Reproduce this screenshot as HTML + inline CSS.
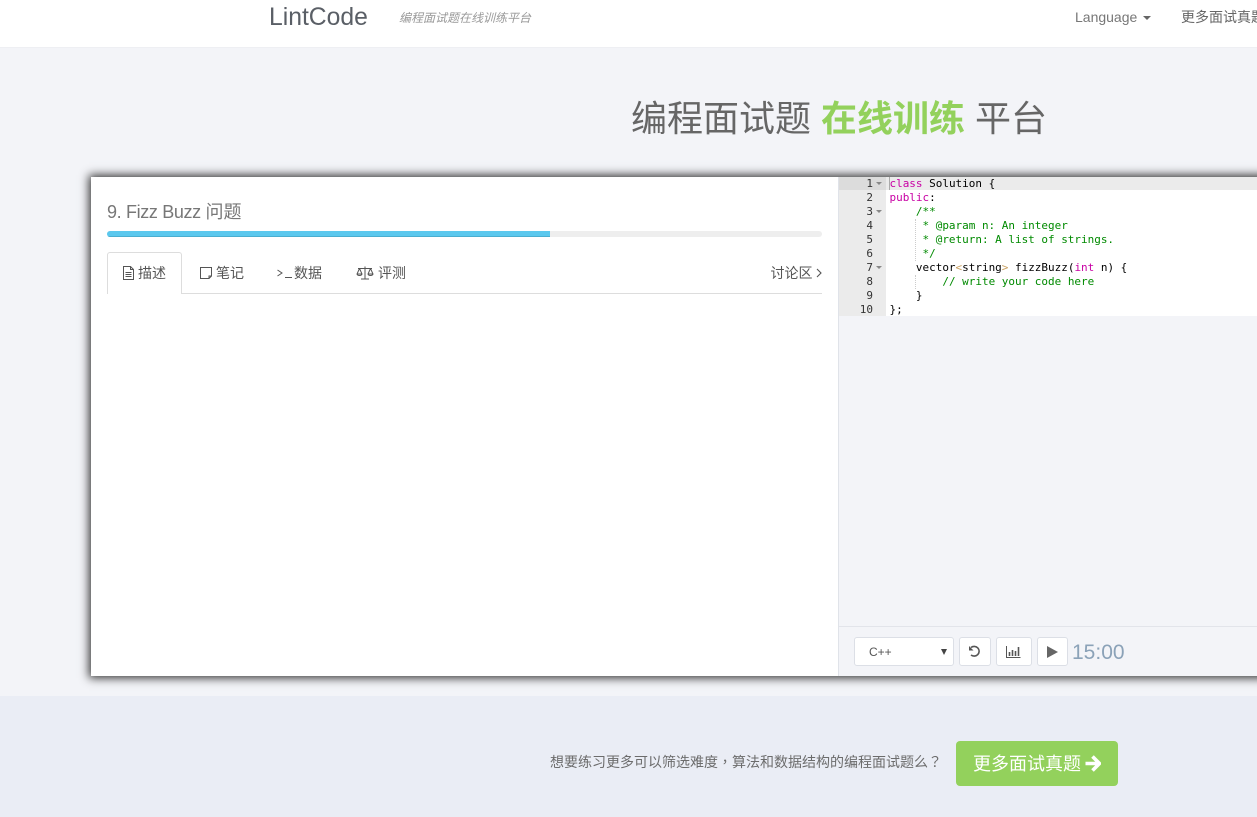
<!DOCTYPE html>
<html>
<head>
<meta charset="utf-8">
<style>
html,body{margin:0;padding:0;width:1257px;height:817px;overflow:hidden;background:#f3f4f8;font-family:"Liberation Sans","Noto Sans CJK SC",sans-serif;color:#666}
.a{position:absolute;white-space:nowrap}
#page{position:relative;width:1257px;height:817px;overflow:hidden}
.code{font-family:"DejaVu Sans Mono","Liberation Mono",monospace;font-size:11px;line-height:14px;white-space:pre;color:#000}
.k{color:#c800a4}.c{color:#008a00}.b{color:#c9a060}
.ln{position:absolute;left:839px;width:34px;text-align:right;font-family:"DejaVu Sans Mono","Liberation Mono",monospace;font-size:11px;line-height:14px;color:#333}
.fold{position:absolute;left:877px;width:0;height:0;border-left:3px solid transparent;border-right:3px solid transparent;border-top:3px solid #888}
.btn{position:absolute;top:637px;height:29px;box-sizing:border-box;background:#fff;border:1px solid #dcdfe6;border-radius:3px}
.tab{font-size:14px;color:#555;top:264px;line-height:18px}
.guide{position:absolute;left:915px;width:0;border-left:1px dotted #ccc}
.tc{font-family:"Noto Sans CJK TC",sans-serif}
</style>
</head>
<body>
<div id="page">
<div class="a" style="left:0;top:0;width:1257px;height:47px;background:#fff;border-bottom:1px solid #eeeff3"></div>
<div class="a" style="left:269px;top:3px;font-size:24.7px;line-height:30px;color:#5a5f66">LintCode</div>
<div class="a" style="left:399px;top:10px;font-size:12px;line-height:16px;font-style:italic;color:#999">编程面试题在线训练平台</div>
<div class="a" style="left:1075px;top:8px;font-size:14px;line-height:18px;color:#777">Language</div>
<div class="a" style="left:1143px;top:16px;width:0;height:0;border-left:4px solid transparent;border-right:4px solid transparent;border-top:4px solid #666"></div>
<div class="a" style="left:1181px;top:8px;font-size:14px;line-height:18px;color:#666">更多面试真题</div>

<div class="a" style="left:631px;top:95px;font-size:36px;line-height:48px;color:#666">编程面试题 <b style="color:#93d15c">在线训练</b> 平台</div>

<div class="a" style="left:0;top:696px;width:1257px;height:121px;background:#eaedf5"></div>

<div class="a" style="left:91px;top:177px;width:1300px;height:499px;background:#fff;box-shadow:0 0 9px 2px #333"></div>
<div class="a" style="left:838px;top:177px;width:419px;height:499px;background:#f3f4f8;border-left:1px solid #e0e3e9;box-sizing:border-box"></div>

<div class="a" style="left:107px;top:200px;font-size:18px;line-height:24px;color:#777"><span style="letter-spacing:-.35px">9. Fizz Buzz </span>问题</div>
<div class="a" style="left:107px;top:231px;width:715px;height:6px;background:#eee;border-radius:3px;overflow:hidden"><div style="width:443px;height:6px;background:#5bc8ee;box-shadow:inset 0 -1px 0 #4aaed0"></div></div>

<div class="a" style="left:107px;top:293px;width:715px;height:1px;background:#ddd"></div>
<div class="a" style="left:107px;top:252px;width:75px;height:42px;box-sizing:border-box;background:#fff;border:1px solid #ddd;border-bottom:0;border-radius:3px 3px 0 0"></div>

<svg class="a" style="left:122px;top:266px" width="13" height="14" viewBox="0 0 13 14" fill="none" stroke="#555" stroke-width="1"><path d="M1.5 .5H8.5L11.5 3.5V13.5H1.5Z M8.5 .5V3.5H11.5 M3.5 6.5H9.5 M3.5 8.5H9.5 M3.5 10.5H9.5"/></svg>
<div class="a tab" style="left:138px">描述</div>
<svg class="a" style="left:200px;top:267px" width="13" height="13" viewBox="0 0 13 13" fill="none" stroke="#555" stroke-width="1"><path d="M.5 .5H11.5V9L9 11.5H.5Z M9 11.5V9H11.5"/></svg>
<div class="a tab" style="left:216px">笔记</div>
<svg class="a" style="left:277px;top:268px" width="16" height="12" viewBox="0 0 16 12" fill="none" stroke="#555" stroke-width="1"><path d="M.5 2L5 5L.5 8 M8 9.5H15"/></svg>
<div class="a tab" style="left:294px">数据</div>
<svg class="a" style="left:356px;top:266px" width="18" height="14" viewBox="0 0 18 14" fill="none" stroke="#555" stroke-width="1"><path d="M9 .5V12.5 M5 13H13 M2 2.5H16 M3.5 2.5L1 8C1.5 10 5.5 10 6 8L3.5 2.5 M14.5 2.5L12 8C12.5 10 16.5 10 17 8L14.5 2.5 M1 8H6 M12 8H17"/></svg>
<div class="a tab" style="left:378px">评测</div>
<div class="a tab" style="left:770.5px">讨论区</div>
<svg class="a" style="left:816px;top:268px" width="6" height="10" viewBox="0 0 6 10" fill="none" stroke="#555" stroke-width="1.1"><path d="M1 1L5 5L1 9"/></svg>

<div class="a" style="left:839px;top:177px;width:418px;height:139px;background:#fff"></div>
<div class="a" style="left:839px;top:177px;width:47px;height:139px;background:#ebebeb"></div>
<div class="a" style="left:839px;top:177px;width:418px;height:13px;background:#ebebeb"></div>
<div class="a" style="left:839px;top:177px;width:47px;height:13px;background:#dcdcdc"></div>
<div class="ln" style="top:177px">1</div><div class="ln" style="top:191px">2</div><div class="ln" style="top:205px">3</div><div class="ln" style="top:219px">4</div><div class="ln" style="top:233px">5</div><div class="ln" style="top:247px">6</div><div class="ln" style="top:261px">7</div><div class="ln" style="top:275px">8</div><div class="ln" style="top:289px">9</div><div class="ln" style="top:303px">10</div>
<div class="fold" style="top:182px;left:876px"></div><div class="fold" style="top:210px;left:876px"></div><div class="fold" style="top:266px;left:876px"></div>
<div class="a" style="left:889px;top:177px;width:1px;height:13px;background:#aaa"></div>
<div class="guide" style="top:219px;height:42px"></div>
<div class="guide" style="top:275px;height:14px"></div>
<div class="a code" style="left:889.5px;top:177px;font-size:10.98px"><span class="k">class</span> Solution {
<span class="k">public</span>:
    <span class="c">/**</span>
<span class="c">     * @param n: An integer</span>
<span class="c">     * @return: A list of strings.</span>
<span class="c">     */</span>
    vector<span class="b">&lt;</span>string<span class="b">&gt;</span> fizzBuzz(<span class="k">int</span> n) {
        <span class="c">// write your code here</span>
    }
};</div>

<div class="a" style="left:839px;top:626px;width:418px;height:1px;background:#e2e4ea"></div>
<div class="btn" style="left:854px;width:100px"></div>
<div class="a" style="left:869px;top:645px;font-size:12px;line-height:14px;color:#555">C++</div>
<div class="a" style="left:941px;top:649px;width:0;height:0;border-left:3px solid transparent;border-right:3px solid transparent;border-top:6px solid #444"></div>
<div class="btn" style="left:959px;width:32px"></div>
<svg class="a" style="left:968px;top:645px" width="13" height="13" viewBox="0 0 13 13" fill="none" stroke="#555" stroke-width="1.6"><path d="M3 2.5A5 4.8 0 1 1 3 10"/><path d="M1 1V5.5H5.5Z" fill="#555" stroke="none"/></svg>
<div class="btn" style="left:996px;width:36px"></div>
<svg class="a" style="left:1006px;top:646px" width="15" height="12" viewBox="0 0 15 12" fill="none" stroke="#555"><path d="M.5 0V11.5H14.5" stroke-width="1"/><path d="M3.5 6V10 M6.5 4V10 M9.5 5V10 M12.5 1V10" stroke-width="1.6"/></svg>
<div class="btn" style="left:1037px;width:31px"></div>
<svg class="a" style="left:1047px;top:646px" width="11" height="12" viewBox="0 0 11 12"><path d="M0 0L11 6L0 12Z" fill="#666"/></svg>
<div class="a" style="left:1072px;top:639px;font-size:21px;line-height:28px;color:#8ba2b8">15:00</div>

<div class="a" style="left:550px;top:753px;font-size:14px;line-height:18px;color:#6c6c6c">想要练习更多可以筛选难度<span class="tc">，</span>算法和数据结构的编程面试题么<span class="tc">？</span></div>
<div class="a" style="left:956px;top:741px;width:162px;height:45px;background:#93d15c;border-radius:4px"></div>
<div class="a" style="left:973px;top:752px;font-size:18px;line-height:25px;color:#fff">更多面试真题</div>
<svg class="a" style="left:1084px;top:755px" width="17" height="17" viewBox="0 0 17 17"><path d="M8.5 1.5L15.5 8.5L8.5 15.5M14 8.5H1.5" fill="none" stroke="#fff" stroke-width="3.6"/></svg>
</div>
</body>
</html>
